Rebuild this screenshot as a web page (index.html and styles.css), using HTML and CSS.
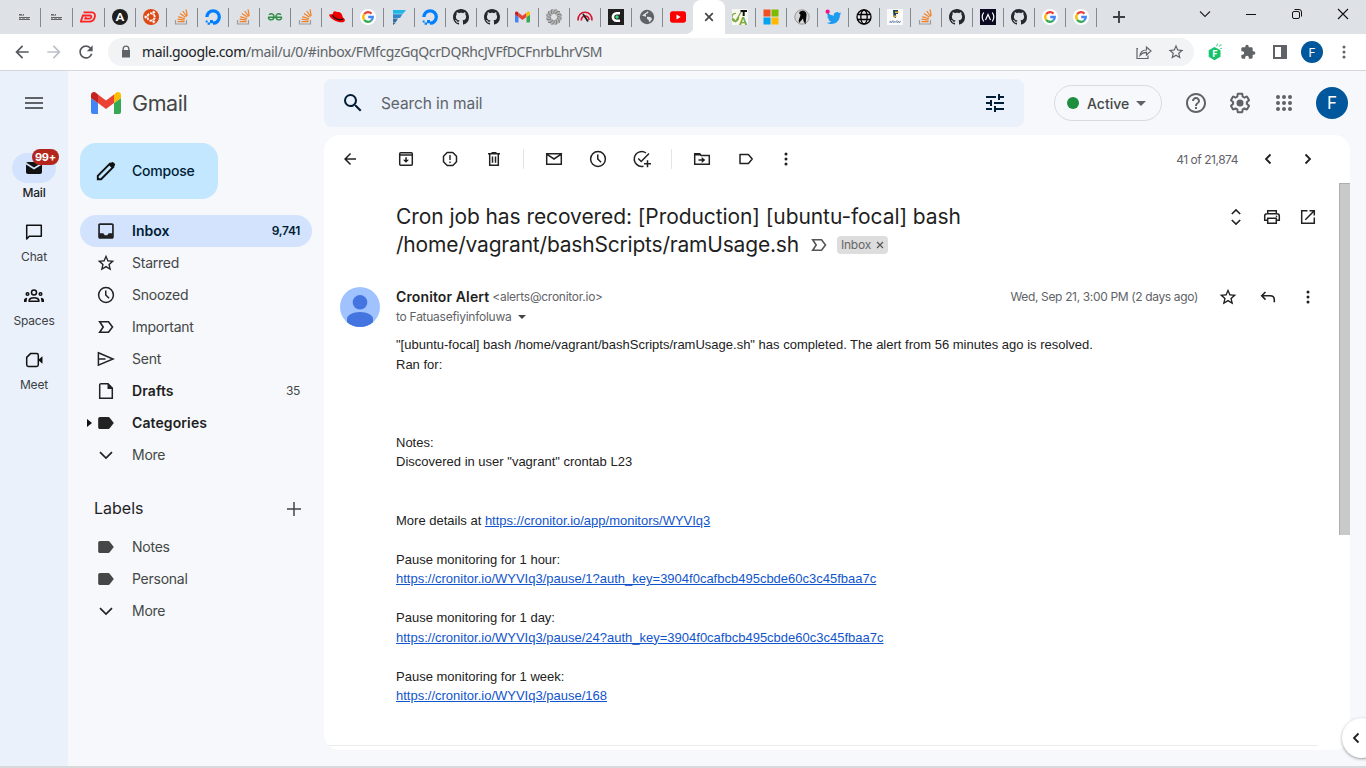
FILE: index.html
```html
<!DOCTYPE html>
<html lang="en">
<head>
<meta charset="utf-8">
<title>Gmail</title>
<link rel="stylesheet" href="styles.css">
</head>
<body>
<svg class="defs" width="0" height="0">
  <symbol id="sketch" viewBox="0 0 16 16"><path d="M3 5.500h3M7 5.500h1M3 8.500h11M3 10.500h11" stroke="#666" stroke-width="1"/><path d="M3 6.500h5M3 9.500h2M6 9.500h3M10 9.500h3" stroke="#999" stroke-width="1"/></symbol>
  <symbol id="so" viewBox="0 0 16 16"><path d="M1.500 11v4h11v-4" fill="none" stroke="#9a9da0" stroke-width="1.200"/><path d="M3.500 12.600h7M3.600 10.200l7 .9M4.300 7.600l6.600 2.100M6 4.600l5.600 3.700M8.700 2l4 5.500M12 .3l1.200 6.500" stroke="#f48024" stroke-width="1.200" fill="none"/></symbol>
  <symbol id="do" viewBox="0 0 16 16"><path d="M8 14.200A6.200 6.200 0 1 0 1.900 8" fill="none" stroke="#0080ff" stroke-width="3.300"/><path d="M5 11h3v3.200H5zM2.600 13.400h2.400v2.300H2.600zM.7 11.500h1.900v1.900H.7z" fill="#0080ff"/></symbol>
  <symbol id="gh" viewBox="0 0 16 16"><path fill="#24292f" d="M8 0C3.580 0 0 3.580 0 8c0 3.540 2.290 6.530 5.470 7.590.4.07.55-.17.55-.38 0-.19-.01-.82-.01-1.490-2.010.37-2.530-.49-2.690-.94-.09-.23-.48-.94-.82-1.130-.28-.15-.68-.52-.01-.53.63-.01 1.080.58 1.230.82.72 1.210 1.870.87 2.330.66.07-.52.28-.87.51-1.070-1.780-.2-3.640-.89-3.640-3.950 0-.87.31-1.590.82-2.150-.08-.2-.36-1.020.08-2.120 0 0 .67-.21 2.200.82.64-.18 1.320-.27 2-.27s1.360.09 2 .27c1.530-1.040 2.200-.82 2.200-.82.44 1.100.16 1.920.08 2.120.51.56.82 1.270.82 2.150 0 3.070-1.870 3.750-3.650 3.950.29.25.54.73.54 1.480 0 1.070-.01 1.930-.01 2.200 0 .21.15.46.55.38A8.010 8.010 0 0 0 16 8c0-4.420-3.580-8-8-8z"/></symbol>
  <symbol id="google" viewBox="0 0 16 16"><circle cx="8" cy="8" r="8" fill="#fff"/><g fill="none" stroke-width="2.300"><path d="M4.200 5.200A4.750 4.750 0 0 1 11.500 4.600" stroke="#ea4335"/><path d="M4.200 10.800A4.750 4.750 0 0 1 4.200 5.200" stroke="#fbbc05"/><path d="M11.300 11.500A4.750 4.750 0 0 1 4.200 10.800" stroke="#34a853"/><path d="M8.200 8H12.750A4.750 4.750 0 0 1 11.300 11.500" stroke="#4285f4"/></g></symbol>
  <symbol id="gmail" viewBox="0 0 30 22"><path fill="#4285f4" d="M0 6l7 5v11H2a2 2 0 0 1-2-2z"/><path fill="#34a853" d="M30 6l-7 5v11h5a2 2 0 0 0 2-2z"/><path fill="#ea4335" d="M7 2.600l8 6 8-6V11l-8 6-8-6z"/><path fill="#c5221f" d="M0 3.200C0 .4 3.200-.9 5.200.9L7 2.500V11L0 6z"/><path fill="#fbbc04" d="M30 3.200C30 .4 26.800-.9 24.800.9L23 2.500V11l7-5z"/></symbol>
  <symbol id="star" viewBox="0 0 24 24"><path d="M22 9.240l-7.190-.62L12 2 9.190 8.630 2 9.240l5.460 4.730L5.820 21 12 17.270 18.180 21l-1.630-7.030L22 9.240zM12 15.400l-3.760 2.270 1-4.280-3.320-2.880 4.380-.38L12 6.100l1.710 4.040 4.380.38-3.320 2.880 1 4.280L12 15.400z"/></symbol>
  <symbol id="back" viewBox="0 0 24 24"><path d="M20 11H7.830l5.590-5.590L12 4l-8 8 8 8 1.410-1.410L7.830 13H20v-2z"/></symbol>
  <symbol id="more" viewBox="0 0 20 20"><circle cx="10" cy="5" r="1.500"/><circle cx="10" cy="10" r="1.500"/><circle cx="10" cy="15" r="1.500"/></symbol>
  <symbol id="clock" viewBox="0 0 20 20"><g fill="none" stroke="currentColor" stroke-width="1.500"><circle cx="10" cy="10" r="7.400"/><path d="M9.750 5.500V10l3.300 3.300"/></g></symbol>
  <symbol id="important" viewBox="0 0 20 20"><path d="M3.700 4.800h8.800l4 5.200-4 5.200H3.700L7.200 10z" fill="none" stroke="currentColor" stroke-width="1.600"/></symbol>
  <symbol id="label" viewBox="0 0 20 20"><path d="M4 4h8.300c.6 0 1 .3 1.400.7L17.800 10l-4.100 5.300c-.4.4-.8.7-1.400.7H4c-1 0-1.800-.8-1.800-1.800V5.800C2.200 4.800 3 4 4 4z"/></symbol>
  <symbol id="down" viewBox="0 0 20 20"><path d="M4 7.200l6 5.900 6-5.900" fill="none" stroke="currentColor" stroke-width="1.700"/></symbol>
  <symbol id="left" viewBox="0 0 20 20"><path d="M12.500 5.500L8 10l4.500 4.500" fill="none" stroke="currentColor" stroke-width="1.800"/></symbol>
</svg>

<header class="tabs">
  <div class="tab wide"><svg><use href="#sketch"/></svg></div>
  <div class="tab wide"><svg><use href="#sketch"/></svg></div>
  <div class="tab wide"><svg viewBox="0 0 16 16"><path d="M3.500 3.400H12c5 0 3.500 9.200-3 9.200H.8L2.900 6.500H10c2.200 0 1.500 3.200-.8 3.200H5.300L6 8" fill="none" stroke="#f22" stroke-width="1.800"/></svg></div>
  <div class="tab"><svg viewBox="0 0 16 16"><circle cx="8" cy="8" r="8"/><text x="8" y="12.200" class="glyph" font-size="12">A</text></svg></div>
  <div class="tab"><svg viewBox="0 0 16 16"><circle cx="8" cy="8" r="8" fill="#dd4814"/><circle cx="8" cy="8" r="3.700" fill="none" stroke="#fff" stroke-width="1.900" stroke-dasharray="6.600 1.150" stroke-dashoffset="-.6"/><g fill="#fff" stroke="#dd4814" stroke-width=".7"><circle cx="2.700" cy="8" r="1.700"/><circle cx="10.700" cy="3.300" r="1.700"/><circle cx="10.700" cy="12.700" r="1.700"/></g></svg></div>
  <div class="tab"><svg><use href="#so"/></svg></div>
  <div class="tab"><svg><use href="#do"/></svg></div>
  <div class="tab"><svg><use href="#so"/></svg></div>
  <div class="tab"><svg viewBox="0 0 16 16"><path d="M2 5.800c2.700-2.200 5.400-.3 5 2.600-.4 3.200-5 3.300-5.700.2M1 8.300h14M14 5.800c-2.700-2.200-5.400-.3-5 2.600.4 3.200 5 3.300 5.700.2" fill="none" stroke="#2f8d46" stroke-width="1.400"/></svg></div>
  <div class="tab"><svg><use href="#so"/></svg></div>
  <div class="tab"><svg viewBox="0 0 16 16"><path d="M.3 5.500c-.8 4.700 13.700 10.500 15.500 6.200.6-1.500-1.500-3-1.500-3L4 5z" fill="#e00"/><path d="M3.600 6.500C4.200 1.300 5 2 8.300 3c3.300-.5 4.800 1.500 5.800 6.400-2 2.700-9 1-10.500-2.900z" fill="#e00"/><path d="M3.500 6.200C5 9.800 11.500 12 14.100 9.700" fill="none" stroke="#111" stroke-width="1.200"/></svg></div>
  <div class="tab"><svg><use href="#google"/></svg></div>
  <div class="tab"><svg viewBox="0 0 16 16"><path d="M2 1h13l-3 3.700H2z" fill="#20b8e8"/><path d="M2 5.300h9.500L9 9H2z" fill="#3186c7"/><path d="M2 9.600h5L5 13H2z" fill="#386fa5"/><path d="M2 13.500h3L2 16z" fill="#22588b"/></svg></div>
  <div class="tab"><svg><use href="#do"/></svg></div>
  <div class="tab"><svg><use href="#gh"/></svg></div>
  <div class="tab"><svg><use href="#gh"/></svg></div>
  <div class="tab"><svg class="gm"><use href="#gmail"/></svg></div>
  <div class="tab"><svg viewBox="0 0 16 16"><circle cx="8" cy="8" r="5.500" fill="none" stroke="#b4b4b4" stroke-width="4.600"/><g fill="none" stroke="#808080" stroke-width="1"><path id="petal" d="M8 5c-1-2 .5-4 2.500-4.500M11 8c2-1 4 .5 4.500 2.500M8 11c1 2-.5 4-2.500 4.500M5 8c-2 1-4-.5-4.500-2.500"/><use href="#petal" transform="rotate(30 8 8)"/><use href="#petal" transform="rotate(60 8 8)"/></g></svg></div>
  <div class="tab"><svg viewBox="0 0 16 16"><g fill="none"><path d="M1 11.500C.5.500 15.500.5 15 11.500M4.300 11.500c-.2-6 7.500-6 7.700-.5" stroke="#d8142e" stroke-width="1.600"/><path d="M6 5l5 7.500" stroke="#222" stroke-width="1.800"/></g></svg></div>
  <div class="tab"><svg viewBox="0 0 16 16"><path d="M0 0h16v16H0z"/><path d="M12 4.200H8.500A3.600 3.800 0 0 0 8.500 11.800H12" fill="none" stroke="#fff" stroke-width="2.600"/><circle cx="9" cy="8" r="1.700" fill="#2ee57a"/></svg></div>
  <div class="tab"><svg viewBox="0 0 16 16"><circle cx="8" cy="8" r="7.200" fill="#5f6368"/><path d="M9 2.200c1 1.600-.1 2.400-1.500 2.600C6 5.200 7.800 7 6.800 7.700L3 6.600M8 8c2.300-.6 4.500.3 5 2l-2.200 3.200C9.200 12 10.500 10.800 8 10z" fill="#dee1e6"/></svg></div>
  <div class="tab bare"><svg viewBox="0 0 16 16"><rect y="2.300" width="16" height="11.400" rx="2.600" fill="#f00"/><path d="M6.500 5.600v4.800L10.700 8z" fill="#fff"/></svg></div>
  <div class="tab active"><svg viewBox="0 0 16 16"><path d="M4.200 4.200l7.600 7.600M11.800 4.200l-7.600 7.600" stroke="#44474a" stroke-width="1.700"/></svg></div>
  <div class="tab"><svg viewBox="0 0 16 16"><path d="M0 0h16v16H0z" fill="#f8f8f3"/><path d="M8.500 1h6.500v2h-2.300v4h-2V3H8.500z" fill="#111"/><path d="M1 9.500l2.500 3L9 3M6.500 8A3.300 4 0 1 1 4 4.500" fill="none" stroke="#7cab3a" stroke-width="1.300"/><text x="11" y="15.500" class="glyph green" font-size="11">A</text></svg></div>
  <div class="tab"><svg viewBox="0 0 16 16"><path fill="#f25022" d="M.5.500h7v7h-7z"/><path fill="#7fba00" d="M8.500.5h7v7h-7z"/><path fill="#00a4ef" d="M.5 8.500h7v7h-7z"/><path fill="#ffb900" d="M8.500 8.500h7v7h-7z"/></svg></div>
  <div class="tab"><svg viewBox="0 0 16 16"><circle cx="8" cy="8" r="7.200" fill="#d5d5d5" stroke="#888" stroke-width=".8"/><path d="M5 4C7 0 13 1.500 12.500 6L11.500 15.500 9.500 12 9 9.500 5 14c-1-3 1-5.500 1.500-8z" fill="#080808"/></svg></div>
  <div class="tab"><svg viewBox="0 0 24 24"><path fill="#1d9bf0" transform="translate(2.500 2.500) scale(.92)" d="M23.953 4.570a10 10 0 0 1-2.825.775 4.958 4.958 0 0 0 2.163-2.723c-.951.555-2.005.959-3.127 1.184a4.920 4.920 0 0 0-8.384 4.482C7.690 8.095 4.067 6.130 1.640 3.162a4.822 4.822 0 0 0-.666 2.475c0 1.710.87 3.213 2.188 4.096a4.904 4.904 0 0 1-2.228-.616v.06a4.923 4.923 0 0 0 3.946 4.827 4.996 4.996 0 0 1-2.212.085 4.936 4.936 0 0 0 4.604 3.417 9.867 9.867 0 0 1-6.102 2.105c-.39 0-.779-.023-1.170-.067a13.995 13.995 0 0 0 7.557 2.209c9.053 0 13.998-7.496 13.998-13.985 0-.21 0-.42-.015-.63A9.935 9.935 0 0 0 24 4.590z"/><circle cx="4" cy="4" r="3.200" fill="#f0148c"/></svg></div>
  <div class="tab"><svg viewBox="0 0 16 16"><g fill="none" stroke="#000" stroke-width="1.300"><circle cx="8" cy="8" r="7"/><ellipse cx="8" cy="8" rx="3.200" ry="7"/><path d="M1.500 5.500h13M1.500 10.500h13"/></g></svg></div>
  <div class="tab"><svg viewBox="0 0 16 16"><path d="M0 0h16v16H0z" fill="#fafafa"/><path d="M6 1h5v4H9v4L6.500 8z" fill="#15415e"/><path d="M8 2.500h3.500V4H8zM6.500 6.500h3V8h-3z" fill="#f3ad20"/><path d="M2 13.500l2-1.500v2l2-2.500v2l2-1v1l2-2v2.500l2-2v2l2-2" fill="none" stroke="#579" stroke-width=".7"/></svg></div>
  <div class="tab"><svg><use href="#so"/></svg></div>
  <div class="tab"><svg><use href="#gh"/></svg></div>
  <div class="tab"><svg viewBox="0 0 16 16"><path fill="#0a0a23" d="M0 0h16v16H0z"/><path d="M3.700 3.500q-3 4.500 0 9M12.300 3.500q3 4.500 0 9M5.500 11L8 5.500l2.500 5.500" fill="none" stroke="#fff" stroke-width="1.200"/></svg></div>
  <div class="tab"><svg><use href="#gh"/></svg></div>
  <div class="tab"><svg><use href="#google"/></svg></div>
  <div class="tab"><svg><use href="#google"/></svg></div>
  <div class="newtab"><svg viewBox="0 0 16 16"><path d="M8 2v12M2 8h12" stroke="#3c4043" stroke-width="1.900"/></svg></div>
  <div class="winctl">
    <svg viewBox="0 0 12 12"><path d="M1 3.500l5 5 5-5" fill="none" stroke="#222" stroke-width="1.100"/></svg>
    <svg viewBox="0 0 12 12"><path d="M1 6.500h10" stroke="#111"/></svg>
    <svg viewBox="0 0 12 12"><rect x="1.500" y="3.500" width="7" height="7" rx="1.500" fill="none" stroke="#111"/><path d="M3.500 1.500H8A2.500 2.500 0 0 1 10.500 4v4.500" fill="none" stroke="#111"/></svg>
    <svg viewBox="0 0 12 12"><path d="M1 1l10 10M11 1L1 11" stroke="#111" stroke-width="1.100"/></svg>
  </div>
</header>

<div class="bar">
  <div class="cell32 nav"><svg class="i20"><use href="#back"/></svg></div>
  <div class="cell32 dim"><svg class="i20 flip"><use href="#back"/></svg></div>
  <div class="cell32 nav"><svg class="i20" viewBox="0 0 24 24"><path d="M17.650 6.350A7.958 7.958 0 0 0 12 4c-4.420 0-7.990 3.580-7.990 8s3.570 8 7.990 8c3.730 0 6.840-2.550 7.730-6h-2.080A5.990 5.990 0 0 1 12 18c-3.310 0-6-2.690-6-6s2.690-6 6-6c1.660 0 3.140.69 4.220 1.780L13 11h7V4l-2.350 2.350z"/></svg></div>
  <div class="omni">
    <svg class="lock" viewBox="0 0 16 16"><path d="M4.500 6V5a3.500 3.500 0 0 1 7 0v1h.5v7.500H4V6zm1.300 0h4.400V5a2.200 2.200 0 0 0-4.400 0z"/></svg>
    <span class="url"><b>mail.google.com</b>/mail/u/0/#inbox/FMfcgzGqQcrDQRhcJVFfDCFnrbLhrVSM</span>
    <svg class="i16" viewBox="0 0 16 16"><path d="M2 4.500H1v10h11v-3M4 11.500c.5-4 2.800-5.500 6.500-5.500V3L15 7l-4.500 4V8.300C8 8.200 6 9 4 11.500z" fill="none" stroke="#5f6368" stroke-width="1.200"/></svg>
    <svg class="i18"><use href="#star"/></svg>
  </div>
  <div class="cell33"><svg class="i18" viewBox="0 0 18 18"><path d="M8.500 4l6 3.200v6.600l-6 3.400-5.800-3.400V7.200z" fill="#16c26b"/><path d="M10 3l2-1.800M13 3.500l2.500-2M14 5.500h2M11 1h1" stroke="#6bdca4" stroke-width="1.200"/><text x="8.700" y="14" class="glyph" font-size="9">F</text></svg></div>
  <div class="cell32"><svg class="i16" viewBox="0 0 24 24"><path d="M20.500 11H19V7c0-1.100-.9-2-2-2h-4V3.500a2.500 2.500 0 0 0-5 0V5H4c-1.100 0-1.990.9-1.990 2v3.800H3.500c1.490 0 2.700 1.210 2.700 2.700s-1.210 2.700-2.700 2.700H2V20c0 1.100.9 2 2 2h3.800v-1.500c0-1.490 1.210-2.700 2.700-2.700 1.490 0 2.700 1.210 2.700 2.700V22H17c1.100 0 2-.9 2-2v-4h1.500a2.500 2.500 0 0 0 0-5z"/></svg></div>
  <div class="cell32"><svg class="i16" viewBox="0 0 16 16"><path d="M1 1h14v14H1zm2 2v10h6V3z" fill-rule="evenodd"/></svg></div>
  <div class="cell32"><div class="me small">F</div></div>
  <div class="cell32"><svg class="i20"><use href="#more"/></svg></div>
</div>

<div class="app">
  <nav class="rail">
    <svg class="i24 burger" viewBox="0 0 24 24"><path d="M3 18h18v-2H3v2zm0-5h18v-2H3v2zm0-7v2h18V6H3z"/></svg>
    <div class="ritem"><div class="pill on"><svg class="i20" viewBox="0 0 20 20"><path d="M2 6c0-1.100.9-2 2-2h12c1.100 0 2 .9 2 2v8c0 1.100-.9 2-2 2H4c-1.100 0-2-.9-2-2z"/><path d="M2 5.500l8 5 8-5" fill="none" stroke="#d3e3fd" stroke-width="1.600"/></svg><i class="badge">99+</i></div><b>Mail</b></div>
    <div class="ritem"><div class="pill"><svg class="i20" viewBox="0 0 20 20"><path d="M2.700 17V3.300h14.600v10.900H5.200z" fill="none" stroke="#111" stroke-width="1.500" stroke-linejoin="round"/></svg></div><span>Chat</span></div>
    <div class="ritem"><div class="pill"><svg class="i20" viewBox="0 0 20 20"><g fill="none" stroke="#111" stroke-width="1.500"><circle cx="10" cy="6.500" r="2.500"/><path d="M5.200 15.300v-1.500c1.500-2.600 8.100-2.600 9.600 0v1.500z"/><circle cx="3.500" cy="8" r="1.300"/><circle cx="16.500" cy="8" r="1.300"/></g><path d="M0 16v-2c0-1.200 1.200-2.200 3.200-2.300L2.500 16zM20 16v-2c0-1.200-1.200-2.200-3.200-2.300l.7 4.300z" fill="#111"/></svg></div><span>Spaces</span></div>
    <div class="ritem"><div class="pill"><svg class="i20" viewBox="0 0 20 20"><path d="M6.500 3.600h6.200c.9 0 1.600.7 1.600 1.600v9.600c0 .9-.7 1.600-1.600 1.600H4.300c-.9 0-1.600-.7-1.600-1.600V7.400z" fill="none" stroke="#111" stroke-width="1.500"/><path d="M14.500 9.500l4-3.200v7.400l-4-3.200z"/></svg></div><span>Meet</span></div>
  </nav>

  <aside class="side">
    <div class="brand"><svg><use href="#gmail"/></svg><span>Gmail</span></div>
    <div class="compose"><svg class="i24" viewBox="0 0 24 24"><path d="M3.800 20.200v-3.300L16 4.700l3.300 3.300L7.100 20.200z" fill="none" stroke="#111" stroke-width="1.900"/><path d="M14.800 5.900l2.500-2.500c.7-.7 1.500-.7 2.200 0l1.100 1.100c.7.7.7 1.500 0 2.200l-2.500 2.500z" fill="#111"/></svg><span>Compose</span></div>
    <div class="item sel"><svg class="i20" viewBox="0 0 20 20"><path d="M4 2.200h12c1 0 1.800.8 1.800 1.800v12c0 1-.8 1.800-1.800 1.800H4c-1 0-1.800-.8-1.800-1.800V4c0-1 .8-1.800 1.800-1.800zM3.900 4v8.300h3.400l1.500 1.900h2.400l1.500-1.900h3.400V4z" fill-rule="evenodd"/></svg><span>Inbox</span><em>9,741</em></div>
    <div class="item"><svg class="i20"><use href="#star"/></svg><span>Starred</span></div>
    <div class="item"><svg class="i20"><use href="#clock"/></svg><span>Snoozed</span></div>
    <div class="item"><svg class="i20"><use href="#important"/></svg><span>Important</span></div>
    <div class="item"><svg class="i20" viewBox="0 0 20 20"><path d="M2.400 3.800L17 10 2.400 16.200zM2.500 10h7" fill="none" stroke="#222" stroke-width="1.500"/></svg><span>Sent</span></div>
    <div class="item strong"><svg class="i20" viewBox="0 0 20 20"><path d="M5 2.700h7l4.300 4.400V17.300H3.700V4c0-.7.6-1.300 1.300-1.300z" fill="none" stroke="#222" stroke-width="1.500"/><path d="M11.500 2v6H17z"/></svg><span>Drafts</span><em>35</em></div>
    <div class="item strong"><i class="tri"></i><svg class="i20"><use href="#label"/></svg><span>Categories</span></div>
    <div class="item"><svg class="i20"><use href="#down"/></svg><span>More</span></div>
    <div class="lhead"><span>Labels</span><svg class="i20" viewBox="0 0 20 20"><path d="M10 3v14M3 10h14" stroke="#444" stroke-width="1.500"/></svg></div>
    <div class="item tag"><svg class="i20"><use href="#label"/></svg><span>Notes</span></div>
    <div class="item tag"><svg class="i20"><use href="#label"/></svg><span>Personal</span></div>
    <div class="item"><svg class="i20"><use href="#down"/></svg><span>More</span></div>
  </aside>

  <main class="main">
    <div class="top">
      <div class="search"><svg class="i24" viewBox="0 0 24 24"><path d="M15.500 14h-.79l-.28-.27A6.471 6.471 0 0 0 16 9.500 6.500 6.500 0 1 0 9.500 16c1.610 0 3.090-.59 4.230-1.570l.27.28v.79l5 4.990L20.490 19l-4.990-5zm-6 0C7.010 14 5 11.990 5 9.500S7.010 5 9.500 5 14 7.010 14 9.500 11.990 14 9.500 14z"/></svg><span>Search in mail</span><svg class="i24" viewBox="0 0 24 24"><path d="M3 17v2h6v-2H3zM3 5v2h10V5H3zm10 16v-2h8v-2h-8v-2h-2v6h2zM7 9v2H3v2h4v2h2V9H7zm14 4v-2H11v2h10zm-6-4h2V7h4V5h-4V3h-2v6z"/></svg></div>
      <div class="status"><i></i><span>Active</span><svg viewBox="0 0 10 5"><path d="M0 0h10L5 5z"/></svg></div>
      <div class="tools">
        <svg class="i24" viewBox="0 0 24 24"><path d="M11 18h2v-2h-2v2zm1-16C6.480 2 2 6.480 2 12s4.480 10 10 10 10-4.480 10-10S17.520 2 12 2zm0 18c-4.410 0-8-3.590-8-8s3.590-8 8-8 8 3.590 8 8-3.590 8-8 8zm0-14c-2.210 0-4 1.790-4 4h2c0-1.100.9-2 2-2s2 .9 2 2c0 2-3 1.750-3 5h2c0-2.250 3-2.500 3-5 0-2.210-1.790-4-4-4z"/></svg>
        <svg class="i24" viewBox="0 0 24 24"><path d="M13.850 22.250h-3.700c-.74 0-1.360-.54-1.450-1.270l-.27-1.890c-.27-.14-.53-.29-.79-.46l-1.800.72c-.7.26-1.470-.03-1.810-.65L2.200 15.530c-.35-.66-.2-1.440.36-1.880l1.530-1.190c-.01-.15-.02-.3-.02-.46 0-.15.01-.31.02-.46l-1.520-1.190c-.59-.45-.74-1.260-.37-1.880l1.850-3.190c.34-.62 1.110-.9 1.790-.63l1.810.73c.26-.17.52-.32.78-.46l.27-1.910c.09-.7.71-1.250 1.440-1.250h3.700c.74 0 1.360.54 1.450 1.270l.27 1.890c.27.14.53.29.79.46l1.800-.72c.71-.26 1.480.03 1.820.65l1.840 3.180c.36.66.2 1.440-.36 1.880l-1.520 1.190c.01.15.02.3.02.46s-.01.31-.02.46l1.520 1.190c.56.45.72 1.230.37 1.860l-1.860 3.220c-.34.62-1.110.9-1.800.63l-1.800-.72c-.26.17-.52.32-.78.46l-.27 1.910c-.1.68-.72 1.220-1.460 1.220zm-3.230-2h2.760l.37-2.550.53-.22c.44-.18.88-.44 1.340-.78l.45-.34 2.380.96 1.380-2.400-2.030-1.580.07-.56c.03-.26.06-.51.06-.78s-.03-.53-.06-.78l-.07-.56 2.030-1.580-1.390-2.400-2.390.96-.45-.35c-.42-.32-.87-.58-1.330-.77l-.52-.22-.37-2.550h-2.760l-.37 2.550-.53.21c-.44.19-.88.44-1.340.79l-.45.33-2.380-.95-1.390 2.390 2.030 1.580-.07.56a7 7 0 0 0-.06.79c0 .26.02.53.06.78l.07.56-2.030 1.580 1.380 2.400 2.390-.96.45.35c.43.33.86.58 1.330.77l.53.22.38 2.550z"/><circle cx="12" cy="12" r="3.500"/></svg>
        <svg class="i24" viewBox="0 0 24 24"><g id="dots"><circle cx="6" cy="6" r="2"/><circle cx="12" cy="6" r="2"/><circle cx="18" cy="6" r="2"/></g><use href="#dots" y="6"/><use href="#dots" y="12"/></svg>
      </div>
      <div class="me">F</div>
    </div>

    <section class="card">
      <div class="acts">
        <div class="c24"><svg class="i18"><use href="#back"/></svg></div><div class="gap"></div>
        <div class="c44"><svg class="i20" viewBox="0 0 20 20"><rect x="3.700" y="3.700" width="12.600" height="12.600" rx="1" fill="none" stroke="#222" stroke-width="1.500"/><path d="M3.500 5.900h13" stroke="#222" stroke-width="1.500"/><path d="M9.300 8.300h1.500v2.500h2.200L10 13.800 7 10.800h2.300z"/></svg></div>
        <div class="c44"><svg class="i20" viewBox="0 0 20 20"><path d="M7.200 3.500h5.600l3.700 3.700v5.600l-3.700 3.700H7.200l-3.700-3.700V7.200z" fill="none" stroke="#222" stroke-width="1.500" stroke-linejoin="round"/><path d="M9.300 6h1.400v5H9.300zM9.300 12.400h1.400v1.500H9.300z"/></svg></div>
        <div class="c44"><svg class="i20" viewBox="0 0 20 20"><path d="M4 4.700h12M7.500 3.700h5M5.700 5v11.300h8.600V5M8.500 7.500v6.300M11.500 7.500v6.300" fill="none" stroke="#222" stroke-width="1.500"/></svg></div>
        <div class="sep"></div>
        <div class="c44"><svg class="i20" viewBox="0 0 20 20"><path d="M2.700 4.700h14.600v10.600H2.700zM2.700 5.200L10 10l7.300-4.800" fill="none" stroke="#222" stroke-width="1.500"/></svg></div>
        <div class="c44"><svg class="i20"><use href="#clock"/></svg></div>
        <div class="c44"><svg class="i20" viewBox="0 0 20 20"><path d="M14 4A7.400 7.400 0 1 0 11.500 17.200M6.200 9.500l3 3 7.800-8M12 14.700h7M15.500 11.200v7" fill="none" stroke="#222" stroke-width="1.500"/></svg></div>
        <div class="sep"></div>
        <div class="c44"><svg class="i20" viewBox="0 0 20 20"><path d="M2.700 15.300V4.700h5l1.500 1.800h8.100v8.800z" fill="none" stroke="#222" stroke-width="1.500"/><path d="M2.700 4.500h5l1.500 2H2.700zM6.500 10.200h3.200V8l3.600 3-3.600 3v-2.200H6.500z"/></svg></div>
        <div class="c44"><svg class="i20" viewBox="0 0 20 20"><path d="M4 5.500h8.400L16.200 10l-3.800 4.500H4z" fill="none" stroke="#222" stroke-width="1.500" stroke-linejoin="round"/></svg></div>
        <div class="c36"><svg class="i20"><use href="#more"/></svg></div>
        <span class="count">41 of 21,874</span>
        <div class="c40"><svg class="i20"><use href="#left"/></svg></div>
        <div class="c40"><svg class="i20 flip"><use href="#left"/></svg></div>
      </div>
      <div class="scroll">
        <div class="content">
          <div class="subject">
            <h1><span class="l1">Cron job has recovered: [Production] [ubuntu-focal] bash</span><br><span class="l2">/home/vagrant/bashScripts/ramUsage.sh</span><svg class="i20 imp"><use href="#important"/></svg><span class="chip">Inbox <svg viewBox="0 0 8 8"><path d="M1 1l6 6M7 1L1 7" stroke="#555" stroke-width="1.200"/></svg></span></h1>
            <div class="c36"><svg class="i20" viewBox="0 0 20 20"><path d="M5.800 7L10 2.900 14.200 7M5.800 13l4.200 4.100 4.200-4.100" fill="none" stroke="#222" stroke-width="1.600"/></svg></div>
            <div class="c36"><svg class="i20" viewBox="0 0 20 20"><path d="M5.700 6.700v-3h8.600v3M5.500 13.300H2.700V9c0-1.200 1-2.300 2.300-2.300h10c1.300 0 2.300 1.100 2.300 2.300v4.300h-2.800M5.700 11.200h8.600v5.100H5.700z" fill="none" stroke="#222" stroke-width="1.500"/><circle cx="14.500" cy="9.200" r=".8"/></svg></div>
            <div class="c36"><svg class="i20" viewBox="0 0 20 20"><path d="M9.500 3.700H3.700v12.600h12.600v-5.800M11.500 3.700h4.800v4.800M16 4L7.300 12.700" fill="none" stroke="#222" stroke-width="1.500"/></svg></div>
          </div>
          <div class="from">
            <svg class="face" viewBox="0 0 40 40"><clipPath id="round"><circle cx="20" cy="20" r="20"/></clipPath><g clip-path="url(#round)"><path fill="#a0c3ff" d="M0 0h40v40H0z"/><circle cx="20" cy="15.300" r="7.300" fill="#4374e0"/><path d="M7 40v-8c0-4 6-7 13-7s13 3 13 7v8z" fill="#4374e0"/></g></svg>
            <div class="who"><div><b>Cronitor Alert</b><span class="addr">&lt;alerts@cronitor.io&gt;</span></div><div><span class="to">to Fatuasefiyinfoluwa</span><i class="caret"></i></div></div>
            <span class="date">Wed, Sep 21, 3:00 PM (2 days ago)</span>
            <div class="c40"><svg class="i20"><use href="#star"/></svg></div>
            <div class="c40"><svg class="i20" viewBox="0 0 20 20"><path d="M7.500 5L3.700 8.800l3.800 3.800M3.700 8.800h8.500c2.500 0 4.100 1.700 4.100 4.200v2.200" fill="none" stroke="#222" stroke-width="1.600"/></svg></div>
            <div class="c40"><svg class="i20"><use href="#more"/></svg></div>
          </div>
          <div class="body">"[ubuntu-focal] bash /home/vagrant/bashScripts/ramUsage.sh" has completed. The alert from 56 minutes ago is resolved.<br>Ran for:<br><br><br><br>Notes:<br>Discovered in user "vagrant" crontab L23<br><br><br>More details at <a>https://cronitor.io/app/monitors/WYVIq3</a><br><br>Pause monitoring for 1 hour:<br><a>https://cronitor.io/WYVIq3/pause/1?auth_key=3904f0cafbcb495cbde60c3c45fbaa7c</a><br><br>Pause monitoring for 1 day:<br><a>https://cronitor.io/WYVIq3/pause/24?auth_key=3904f0cafbcb495cbde60c3c45fbaa7c</a><br><br>Pause monitoring for 1 week:<br><a>https://cronitor.io/WYVIq3/pause/168</a></div>
          <div class="rule"></div>
        </div>
        <div class="thumb"></div>
      </div>
    </section>
  </main>
  <div class="panelbtn"><svg class="i20"><use href="#left"/></svg></div>
</div>
</body>
</html>
```
FILE: styles.css
```css
* { box-sizing: border-box; }
body { margin: 0; width: 1366px; height: 768px; overflow: hidden; font-family: Inter, "Noto Sans", sans-serif; color: #1f1f1f; display: flex; flex-direction: column; }
svg { display: block; flex: none; fill: currentColor; }
.defs { position: absolute; }
i, em { font-style: normal; }
.i16 { width: 16px; height: 16px; }
.i18 { width: 18px; height: 18px; }
.i20 { width: 20px; height: 20px; }
.i24 { width: 24px; height: 24px; }
.flip { transform: scaleX(-1); }
.glyph { font-family: Lato, sans-serif; font-weight: 900; fill: #fff; text-anchor: middle; }
.glyph.green { fill: #73a630; }

/* browser chrome */
.tabs { height: 34px; flex: none; background: #dee1e6; padding-left: 9px; display: flex; }
.tab { width: 31px; height: 34px; display: flex; align-items: center; padding-left: 7px; background: linear-gradient(#85888c, #85888c) 100% 8px / 1px 19px no-repeat; }
.tab svg { width: 16px; height: 16px; }
.tab .gm { height: 12px; width: 15px; }
.tab.wide { width: 32px; }
.tab.bare { background: radial-gradient(circle at 0 0, #dee1e6 7.500px, #fff 8px) 100% 100% / 8px 8px no-repeat; }
.tab.active { background: #fff; border-radius: 8px 8px 0 0; width: 32px; margin-left: -1px; padding-left: 8px; }
.newtab { width: 44px; display: flex; align-items: center; justify-content: center; }
.newtab svg { width: 16px; height: 16px; }
.winctl { margin-left: auto; padding: 8px 17px 0 0; display: flex; gap: 34px; }
.winctl svg { width: 12px; height: 12px; }
.bar { height: 37px; flex: none; background: #fff; border-bottom: 1px solid #d5d7da; display: flex; align-items: center; padding-left: 6px; color: #5f6368; }
.cell32, .cell33 { width: 32px; display: flex; justify-content: center; }
.cell33 { width: 38px; padding-left: 4px; }
.dim { color: #bdc1c6; }
.nav { color: #55585c; }
.omni { width: 1086px; height: 28px; margin-left: 6px; border-radius: 14px; background: #f1f3f4; display: flex; align-items: center; padding: 0 9px 0 10px; gap: 15px; }
.lock { width: 16px; height: 16px; }
.url { flex: 1; margin: -2px 0 0 -7px; font: 14px "Noto Sans", sans-serif; letter-spacing: -.38px; white-space: nowrap; }
.url b { font-weight: 400; color: #202124; }
.me { width: 32px; height: 32px; border-radius: 50%; background: #01579b; color: #fff; font-size: 17px; display: flex; align-items: center; justify-content: center; }
.me.small { width: 22px; height: 22px; font-size: 12px; }

/* application frame */
.app { flex: 1; min-height: 0; background: #f6f8fc; border-bottom: 2px solid #d8d9db; display: flex; position: relative; }
.rail { width: 68px; background: #eaf1fb; display: flex; flex-direction: column; align-items: center; }
.burger { color: #5f6368; margin: 20px 0 38px; }
.ritem { height: 64px; width: 68px; display: flex; flex-direction: column; align-items: center; font-size: 12px; color: #3c4043; line-height: 20px; letter-spacing: -.15px; }
.ritem b { font-weight: 500; color: #222; }
.pill { width: 44px; height: 30px; border-radius: 15px; display: flex; align-items: center; justify-content: center; position: relative; color: #111; }
.pill.on { background: #d3e3fd; }
.badge { position: absolute; left: 20px; top: -4px; width: 27px; height: 16px; border-radius: 8px; background: #b3261e; color: #fff; font-size: 11px; font-weight: 700; line-height: 16px; text-align: center; letter-spacing: -.2px; }
.side { width: 256px; padding: 8px 12px 0; display: flex; flex-direction: column; }
.brand { height: 48px; display: flex; align-items: center; gap: 11px; padding-left: 11px; font-size: 21.500px; color: #444746; letter-spacing: -.4px; }
.brand svg { width: 30px; height: 22px; }
.compose { width: 138px; height: 56px; margin: 16px 0; border-radius: 16px; background: #c2e7ff; color: #001d35; display: flex; align-items: center; gap: 14px; padding-left: 14px; font-size: 14px; font-weight: 500; letter-spacing: -.2px; }
.compose span, .item span, .item em { padding-bottom: 2px; }
.item { height: 32px; border-radius: 16px; display: flex; align-items: center; padding: 0 12px 0 16px; font-size: 14px; color: #444746; letter-spacing: -.25px; position: relative; }
.item svg { color: #222; margin-right: 16px; }
.item em { margin-left: auto; font-size: 12px; letter-spacing: -.3px; }
.item.sel { background: #d3e3fd; color: #001d35; font-weight: 600; }
.item.sel span { letter-spacing: 0; }
.item.strong span { font-weight: 600; color: #1f1f1f; letter-spacing: .1px; }
.item.tag svg { color: #444746; }
.tri { position: absolute; left: 7px; top: 12px; border: 4px solid transparent; border-left: 5px solid #111; border-right: 0; }
.lhead { height: 40px; margin: 18px 0 2px; padding: 0 8px 0 14px; display: flex; align-items: center; justify-content: space-between; font-size: 16px; }
.lhead span { padding-bottom: 2px; }

/* header */
.main { width: 1026px; padding-top: 8px; display: flex; flex-direction: column; gap: 8px; }
.top { height: 48px; display: flex; align-items: center; }
.search { width: 700px; height: 48px; border-radius: 8px; background: #eaf1fb; color: #001d35; display: flex; align-items: center; padding: 0 17px; }
.search span { flex: 1; margin-left: 16px; color: #5f6368; font-size: 15.500px; letter-spacing: -.1px; }
.status { width: 108px; height: 36px; margin-left: 30px; border: 1px solid #d8dade; border-radius: 18px; display: flex; align-items: center; padding-left: 12px; color: #444746; font-size: 14px; font-weight: 500; }
.status i { width: 12px; height: 12px; border-radius: 50%; background: #1e8e3e; margin-right: 8px; }
.status span { width: 49px; }
.status svg { width: 10px; height: 5px; color: #5f6368; }
.tools { display: flex; gap: 20px; margin: 0 20px 0 22px; color: #5f6368; }

/* message card */
.card { width: 1026px; height: 615px; background: #fff; border-radius: 16px; overflow: hidden; }
.acts { height: 48px; display: flex; align-items: center; padding: 0 22px 0 14px; }
.acts > div, .c36, .c40 { display: flex; justify-content: center; flex: none; }
.c24 { width: 24px; }
.gap { width: 22px; }
.c44 { width: 44px; }
.c36 { width: 36px; }
.c40 { width: 40px; }
.sep { width: 16px; height: 20px; background: linear-gradient(#e3e4e6, #e3e4e6) 7px 0 / 1px 20px no-repeat; }
.count { margin-left: auto; margin-right: 10px; font-size: 12px; color: #5f6368; letter-spacing: -.47px; }
.scroll { display: flex; height: 567px; }
.content { width: 1015px; }
.thumb { width: 11px; height: 352px; background: #c9c9c9; border-left: 1px solid #adadad; border-top: 1px solid #adadad; }
.subject { display: flex; padding: 20px 13px 0 72px; }
.subject .c36 { padding-top: 4px; }
h1 { flex: 1; margin: 0; font-size: 21px; font-weight: 400; line-height: 28px; white-space: nowrap; }
.l1 { letter-spacing: -.08px; }
.l2 { letter-spacing: -.2px; }
.imp { display: inline-block; vertical-align: -3px; margin: 0 8px 0 10px; color: #555; }
.chip { display: inline-flex; align-items: center; gap: 5px; height: 18px; width: 51px; padding-left: 4px; border-radius: 4px; background: #ddd; color: #666; font-size: 12px; letter-spacing: -.2px; vertical-align: 3px; }
.chip svg { width: 8px; height: 8px; }
.from { display: flex; padding: 24px 11px 0 16px; height: 68px; line-height: 20px; }
.face { width: 40px; height: 40px; margin: 4px 16px 0 0; }
.who { flex: 1; padding-top: 4px; font-size: 12px; color: #5f6368; letter-spacing: -.26px; }
.who > div { display: flex; align-items: center; height: 20px; }
.who b { font-size: 14px; font-weight: 600; color: #1f1f1f; margin-right: 3px; letter-spacing: .12px; }
.caret { border: 4px solid transparent; border-top-color: #444; border-bottom: 0; margin-left: 7px; }
.date { font-size: 12px; color: #5f6368; margin: 4px 10px 0 0; letter-spacing: -.35px; }
.from .c40 { padding-top: 4px; }
.body { margin: 8px 0 0 72px; font: 13px/19.500px "Liberation Sans", Arial, sans-serif; color: #222; white-space: nowrap; }
.body a { color: #15c; text-decoration: underline; }
.rule { height: 1px; background: #ececec; width: 994px; margin-top: 39px; }
.panelbtn { position: absolute; left: 1342px; top: 647px; width: 40px; height: 40px; border-radius: 50%; background: #fff; box-shadow: 0 1px 3px rgba(60,64,67,.5); display: flex; align-items: center; padding-left: 4px; }
```
